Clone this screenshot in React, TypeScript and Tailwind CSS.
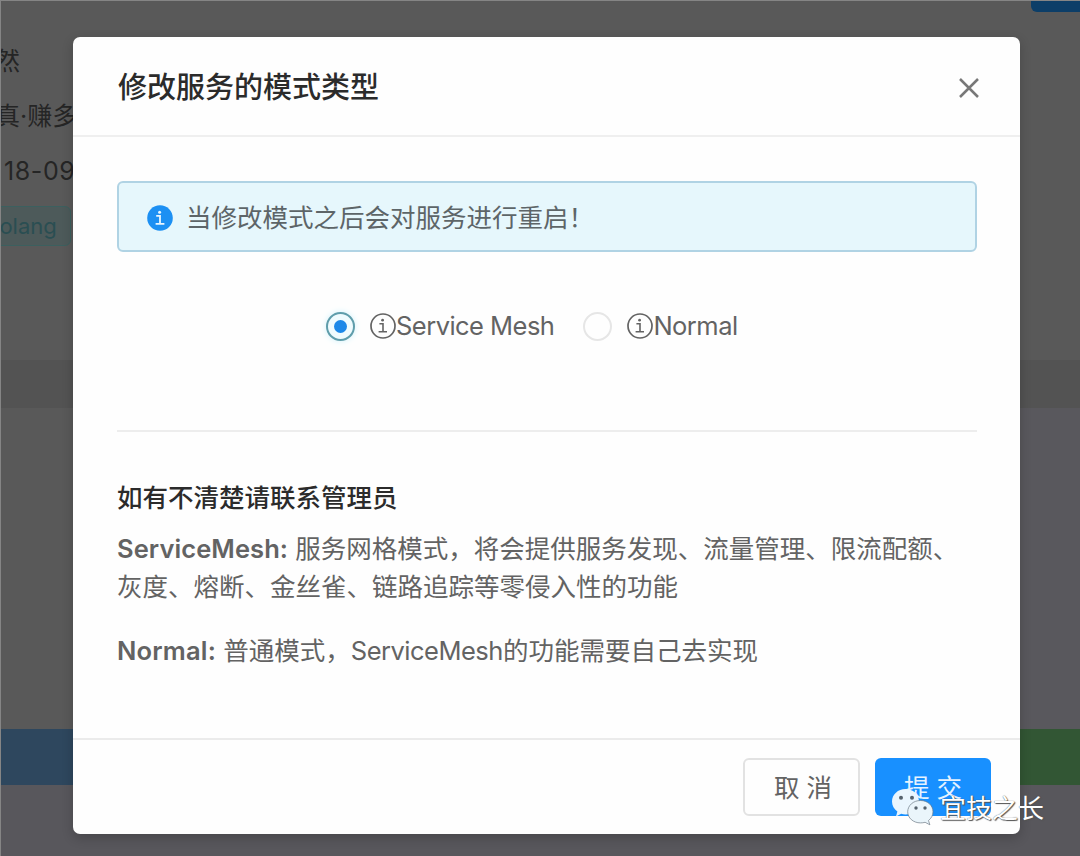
import clsx from "clsx"
import { useState } from "react"

const InfoOutline: React.FC = () => (
  <svg viewBox="0 0 26 26" className="w-[26px] h-[26px] shrink-0 -mt-[1px]" fill="none">
    <circle cx="13" cy="13" r="12" stroke="#636363" strokeWidth="1.7" />
    <circle cx="12.6" cy="7.2" r="1.4" fill="#636363" />
    <path d="M9.4 10.8h3.6v7.8M8.6 18.8h8.4" stroke="#636363" strokeWidth="1.6" />
  </svg>
)

const InfoSolid: React.FC = () => (
  <svg viewBox="0 0 26 26" className="w-[26px] h-[26px] shrink-0 mt-[2px]" fill="none">
    <circle cx="13" cy="13" r="12.8" fill="#1c90f3" />
    <circle cx="12.6" cy="7.2" r="1.5" fill="#e8f6ff" />
    <path d="M9.2 10.8h3.8v7.8M8.6 18.8h8.8" stroke="#e8f6ff" strokeWidth="1.8" />
  </svg>
)

const WechatIcon: React.FC = () => (
  <svg viewBox="0 0 46 40" className="w-[46px] h-[40px]" stroke="#6d7a85" strokeWidth="0.7">
    <path
      d="M15.5 2C8 2 2 7.500 2 14.500c0 4.200 2.100 7.700 5.400 10L6 29.400l5.200-2.600c1.500.4 2.800.6 4.300.6C23 27.400 29 21.700 29 14.500S23 2 15.500 2z"
      fill="#eaf6fe"
      stroke="none"
    />
    <circle cx="11" cy="10.8" r="2" fill="#55626d" stroke="none" />
    <circle cx="22" cy="10.8" r="2" fill="#55626d" stroke="none" />
    <path
      d="M30.500 13.500c7.200 0 12.500 5 12.500 11.300 0 3.500-1.700 6.600-4.500 8.700l1.400 4.300-4.800-2.500c-1.500.4-3 .6-4.600.6-7.200 0-12.800-4.900-12.800-11.100 0-6.300 5.600-11.300 12.800-11.300z"
      fill="#eaf5fb"
    />
    <circle cx="26" cy="21" r="1.7" fill="#55626d" stroke="none" />
    <circle cx="35" cy="21" r="1.7" fill="#55626d" stroke="none" />
  </svg>
)

const modes = [
  { value: "mesh", label: "Service Mesh" },
  { value: "normal", label: "Normal" },
]

const ServicePage: React.FC = () => (
  <div className="h-full flex flex-col border-t border-l border-[#858585] bg-[#595959] text-[#252525] text-[25px] leading-[30px] overflow-hidden">
    <div className="flex justify-between h-[359px] shrink-0">
      <div className="w-[200px] pt-[45px] whitespace-nowrap">
        <div className="-ml-[6px]">然</div>
        <div className="-ml-[6px] mt-[25px]">真·赚多少</div>
        <div className="ml-[3px] mt-[25px] tracking-[0.6px]">18-09-12</div>
        <div className="mt-[20px] -ml-[20px] w-[90px] h-[40px] rounded-[6px] border border-[#3c605f] bg-[#4d5a5a] text-[#2a4e52] text-[22px] leading-[39px] pl-[1px]">
          Golang
        </div>
      </div>
      <div className="w-[49px] h-[11px] bg-[#0c3e68] rounded-bl-[6px]"></div>
    </div>
    <div className="h-[48px] shrink-0 bg-[#535353]"></div>
    <div className="h-[321px] shrink-0 flex">
      <div className="flex-1"></div>
      <div className="w-[70px] bg-[#59585d]"></div>
    </div>
    <div className="h-[56px] shrink-0 flex">
      <div className="flex-1 bg-[#2e475e]"></div>
      <div className="w-[70px] bg-[#325634]"></div>
    </div>
    <div className="flex-1 bg-[#58575c]"></div>
  </div>
)

const ModeModal: React.FC = () => {
  const [mode, setMode] = useState("mesh")

  return (
    <div className="w-[947px] h-[797px] bg-[#fefefe] rounded-[7px] shadow-[0_4px_12px_rgba(0,0,0,0.2)] flex flex-col">
      <div className="h-[100px] border-b-2 border-[#efefef] px-[44px] flex items-center justify-between">
        <div className="mt-[3px] ml-[1px] text-[29px] font-medium text-[#2b2b2b]">修改服务的模式类型</div>
        <button aria-label="close" className="-mr-[4px] mt-[4px]">
          <svg viewBox="0 0 22 22" className="w-[22px] h-[22px]">
            <path d="M2 2l18 18M20 2L2 20" stroke="#787878" strokeWidth="2.5" />
          </svg>
        </button>
      </div>
      <div className="flex-1 px-[44px] pt-[44px]">
        <div className="h-[71px] w-[860px] rounded-[6px] border-2 border-[#b0d3e4] bg-[#e6f7fc] pl-[28px] flex items-center">
          <InfoSolid />
          <span className="ml-[13px] pt-[3px] text-[#5d6568]">当修改模式之后会对服务进行重启！</span>
        </div>
        <div className="mt-[58px] h-[32px] pl-[209px] flex items-center">
          {modes.map((item) => (
            <button
              key={item.value}
              className="flex items-center mr-[29px]"
              onClick={() => setMode(item.value)}
            >
              <span
                className={clsx(
                  "w-[29px] h-[29px] rounded-full border-2 flex items-center justify-center mr-[15px]",
                  mode === item.value
                    ? "border-[#5f9dab] bg-[#effbfe] shadow-[0_0_6px_#d2f3fb]"
                    : "border-[#e6e6e6]",
                )}
              >
                {mode === item.value && (
                  <span className="w-[13px] h-[13px] rounded-full bg-[#1c88e8]"></span>
                )}
              </span>
              <InfoOutline />
              <span className="pt-[1px] tracking-[-0.53px]">{item.label}</span>
            </button>
          ))}
        </div>
        <div className="mt-[88px] h-[2px] w-[860px] bg-[#ededed]"></div>
        <div className="mt-[47px] leading-[38px] font-medium text-[#2b2b2b]">如有不清楚请联系管理员</div>
        <p className="mt-[13px] leading-[38px] whitespace-nowrap">
          <b className="font-semibold tracking-[0.08px]">ServiceMesh:</b> 服务网格模式，将会提供服务发现、流量管理、限流配额、
          <br />
          灰度、熔断、金丝雀、链路追踪等零侵入性的功能
        </p>
        <p className="mt-[26px] leading-[38px]">
          <b className="font-semibold tracking-[0.2px]">Normal:</b> 普通模式，
          <span className="tracking-[-0.5px]">ServiceMesh</span>的功能需要自己去实现
        </p>
      </div>
      <div className="h-[96px] border-t-2 border-[#ebebeb] pt-[18px] pr-[29px] flex justify-end gap-[15px]">
        <button className="w-[117px] h-[58px] pt-[3px] pl-[3px] rounded-[6px] border-2 border-[#e2e2e2]">取 消</button>
        <button className="w-[116px] h-[58px] pt-[3px] rounded-[6px] bg-[#1890ff] text-[#e6f3ff]">提 交</button>
      </div>
    </div>
  )
}

export default function App() {
  return (
    <div className="relative w-[1080px] h-[856px] overflow-hidden font-[Inter,'Noto_Sans_CJK_SC',sans-serif]">
      <ServicePage />
      <div className="absolute inset-0 pl-[73px] pt-[37px] text-[25.5px] text-[#636363]">
        <ModeModal />
      </div>
      <div className="absolute left-[890px] top-[785px] flex items-center whitespace-nowrap">
        <WechatIcon />
        <span className="ml-[4px] mt-[4px] text-[26px] text-white [text-shadow:0_0_1px_#444,1px_1px_1px_#555]">
          宜技之长
        </span>
      </div>
    </div>
  )
}
